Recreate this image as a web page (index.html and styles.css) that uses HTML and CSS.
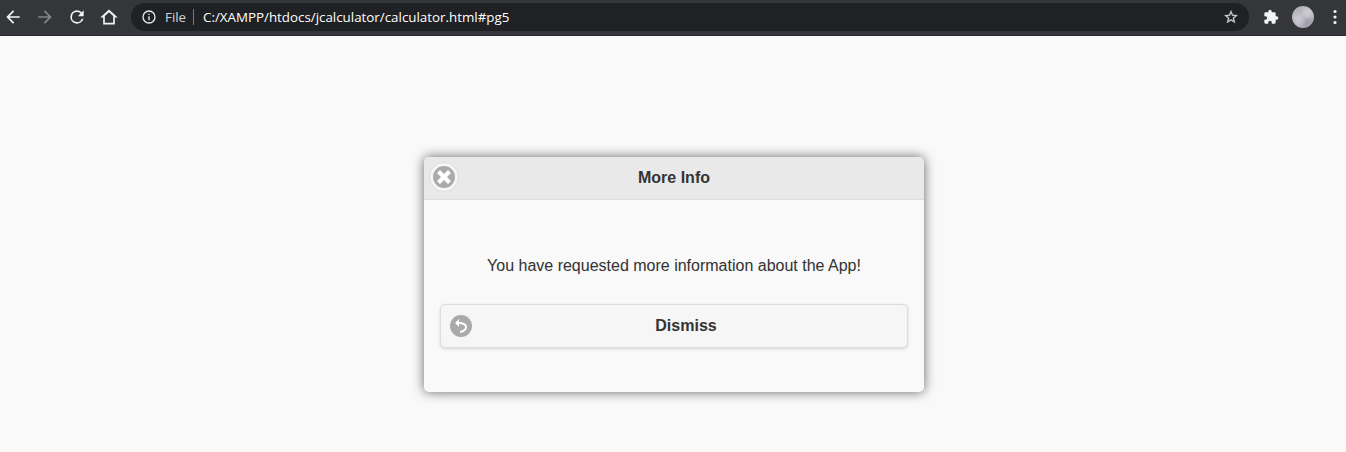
FILE: index.html
```html
<!DOCTYPE html>
<html lang="en">
<head>
<meta charset="utf-8">
<title>More Info</title>
<link rel="stylesheet" href="styles.css">
</head>
<body>
<header class="toolbar">
  <nav class="nav">
    <svg class="icon" viewBox="0 0 24 24"><path d="M20 11H7.83l5.59-5.59L12 4l-8 8 8 8 1.41-1.41L7.83 13H20z"/></svg>
    <svg class="icon icon-off" viewBox="0 0 24 24"><path d="M12 4l-1.41 1.41L16.17 11H4v2h12.17l-5.58 5.59L12 20l8-8z"/></svg>
    <svg class="icon" viewBox="0 0 24 24"><path d="M17.65 6.35A7.96 7.96 0 0 0 12 4a8 8 0 1 0 7.73 10h-2.08A6 6 0 1 1 12 6c1.66 0 3.14.69 4.22 1.78L13 11h7V4z"/></svg>
    <svg class="icon" viewBox="0 0 24 24"><path d="M12 3L1.500 12.500H5V21h14v-8.500h3.500zM7 19v-8.200l5-4.600 5 4.600V19z"/></svg>
  </nav>
  <div class="address">
    <svg class="info" viewBox="0 0 24 24"><path d="M11 7h2v2h-2zm0 4h2v6h-2zm1-9a10 10 0 1 0 0 20 10 10 0 0 0 0-20zm0 18a8 8 0 1 1 0-16 8 8 0 0 1 0 16z"/></svg>
    <span class="scheme">File</span>
    <span class="divider"></span>
    <span class="url">C:/XAMPP/htdocs/jcalculator/calculator.html#pg5</span>
    <svg class="star" viewBox="0 0 24 24"><path d="M22 9.240l-7.190-.62L12 2 9.190 8.630 2 9.240l5.460 4.730L5.820 21 12 17.270 18.180 21l-1.630-7.030zM12 15.400l-3.760 2.270 1-4.280-3.320-2.880 4.380-.38L12 6.100l1.710 4.040 4.380.38-3.320 2.880 1 4.280z"/></svg>
  </div>
  <svg class="puzzle" viewBox="0 0 24 24"><path d="M20.500 11H19V7a2 2 0 0 0-2-2h-4V3.500a2.500 2.500 0 0 0-5 0V5H4a2 2 0 0 0-2 2v3.800h1.500a2.700 2.700 0 0 1 0 5.400H2V20a2 2 0 0 0 2 2h3.800v-1.500a2.700 2.700 0 0 1 5.400 0V22H17a2 2 0 0 0 2-2v-4h1.500a2.500 2.500 0 0 0 0-5z"/></svg>
  <span class="avatar"></span>
  <svg class="dots" viewBox="0 0 4 16"><circle cx="2" cy="2.500" r="1.600"/><circle cx="2" cy="8" r="1.600"/><circle cx="2" cy="13.500" r="1.600"/></svg>
</header>
<main class="page">
  <section class="dialog">
    <div class="dialog-header">
      <a class="close"><svg class="disc" viewBox="0 0 22 22"><circle cx="11" cy="11" r="11" fill="#aaa"/><path transform="translate(4 4)" fill="#fff" d="M14 3l-3-3-4 4-4-4-3 3 4 4-4 4 3 3 4-4 4 4 3-3-4-4z"/></svg></a>
      <h1 class="title">More Info</h1>
    </div>
    <div class="dialog-body">
      <p class="message">You have requested more information about the App!</p>
      <a class="button">
        <svg class="disc" viewBox="0 0 22 22"><circle cx="11" cy="11" r="11" fill="#aaa"/><path transform="translate(4 4)" fill="#fff" d="M5 3V0L1 4l4 4V5c0 0 6 0 6 3s-5 4-5 4v2c0 0 7-1 7-6 0-4-5-5-8-5z"/></svg>
        <span class="label">Dismiss</span>
      </a>
    </div>
  </section>
</main>
</body>
</html>
```
FILE: styles.css
```css
* { box-sizing: border-box; }
body {
  margin: 0;
  height: 452px;
  overflow: hidden;
  display: flex;
  flex-direction: column;
  background: #f9f9f9;
  font-family: "Liberation Sans", Arial, sans-serif;
  font-size: 16px;
  color: #333;
}
.toolbar {
  flex: none;
  height: 36px;
  display: flex;
  align-items: center;
  padding: 0 9px 1px 3px;
  background: #35363a;
  border-bottom: 1px solid #28292c;
  fill: #f1f3f4;
}
.nav { display: flex; gap: 12px; width: 128px; flex: none; }
.icon { width: 20px; height: 20px; flex: none; }
.icon-off { fill: #85868a; }
.address {
  width: 1118px;
  height: 28px;
  flex: none;
  display: flex;
  align-items: center;
  padding: 0 10px;
  border-radius: 14px;
  background: #202124;
  font-family: "Open Sans", "Noto Sans", sans-serif;
  font-size: 13.35px;
  line-height: 28px;
}
.info { width: 16px; height: 16px; fill: #e8eaed; }
.scheme { width: 28px; margin-left: 8px; color: #d0d3d7; }
.divider { width: 1px; height: 16px; background: #777a7e; }
.url { margin-left: 9px; color: #fff; white-space: nowrap; }
.star { width: 16px; height: 16px; margin-left: auto; fill: #d0d3d6; stroke: #d0d3d6; stroke-width: .4; }
.puzzle { width: 16px; height: 16px; margin-left: 14px; }
.avatar {
  width: 22px;
  height: 22px;
  margin-left: 13px;
  border-radius: 50%;
  background:
    radial-gradient(circle at 70% 30%, #cbc9d1 0 10%, transparent 35%),
    radial-gradient(circle at 30% 60%, #c8c6ce 0 10%, transparent 40%),
    radial-gradient(circle at 70% 75%, #9d9ba6 0, transparent 40%),
    #b3b1ba;
}
.dots { width: 4px; height: 16px; margin-left: auto; }
.page { flex: 1; display: flex; justify-content: center; align-items: flex-start; padding: 121px 0 0 2px; }
.dialog {
  width: 500px;
  height: 235px;
  border-radius: 5px;
  background: #f9f9f9;
  box-shadow: 0 0 12px rgba(0, 0, 0, .6);
}
.dialog-header {
  height: 43px;
  display: flex;
  align-items: flex-start;
  padding: 5px 35px 0 5px;
  border-bottom: 1px solid #ddd;
  border-radius: 5px 5px 0 0;
  background: #e9e9e9;
}
.close {
  width: 30px;
  height: 30px;
  flex: none;
  display: flex;
  align-items: center;
  justify-content: center;
  border: 1px solid #ddd;
  border-radius: 50%;
  background: #f6f6f6;
}
.disc { width: 22px; height: 22px; flex: none; display: block; }
.title { flex: 1; margin: 5px 0 0; font-size: 16px; line-height: 21px; text-align: center; text-shadow: 0 1px 0 #eee; }
.dialog-body { padding: 55px 16px 0; }
.message { margin: 0 0 28px; line-height: 21px; text-align: center; text-shadow: 0 1px 0 #f3f3f3; }
.button {
  height: 44px;
  display: flex;
  align-items: center;
  padding: 0 16px 0 9px;
  border: 1px solid #ddd;
  border-radius: 5px;
  background: #f6f6f6;
  box-shadow: 0 1px 3px rgba(0, 0, 0, .15);
  font-weight: 700;
}
.label { flex: 1; margin-left: 9px; text-align: center; text-shadow: 0 1px 0 #f3f3f3; }
```
